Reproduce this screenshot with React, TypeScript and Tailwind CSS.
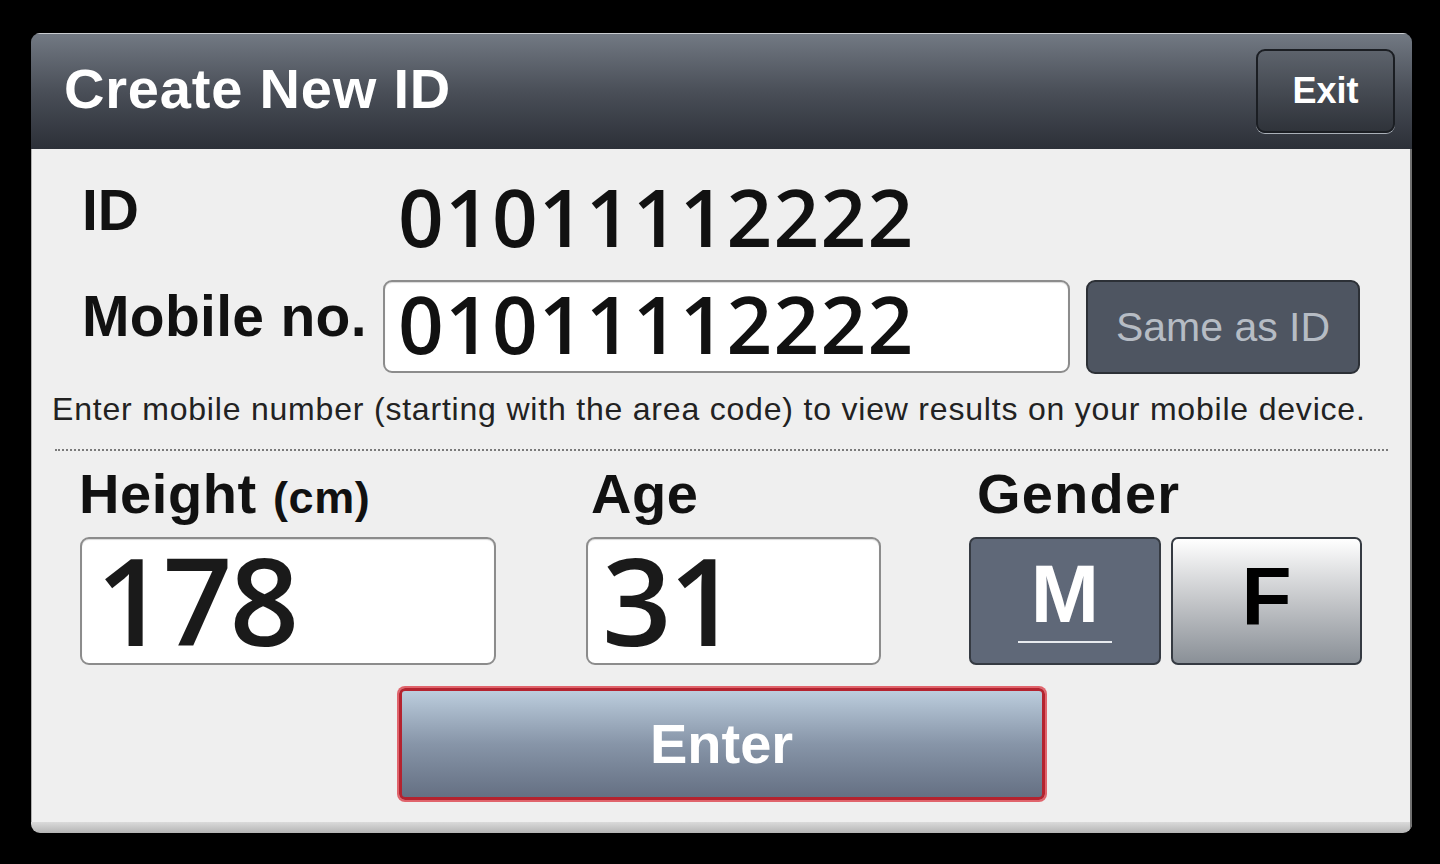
import React from "react";

const sans = { fontFamily: '"Liberation Sans", Arial, sans-serif' };
const digits = { fontFamily: '"Open Sans", "Noto Sans", sans-serif' };

export default function App() {
  return (
    <div className="w-[1440px] h-[864px] bg-black pt-[33px] pl-[31px]" style={sans}>
      <div className="w-[1381px] h-[800px] rounded-[9px] overflow-hidden flex flex-col">
        {/* title bar */}
        <div className="h-[116px] flex items-start justify-between pl-[33px] pr-[17px] bg-gradient-to-b from-[#737a84] via-[#4a4f58] to-[#2c3038] shadow-[inset_0_1px_0_#c9ccd0]">
          <div className="mt-[28px] text-[56px] leading-none font-bold text-white tracking-[0.8px]">
            Create New ID
          </div>
          <button className="mt-[16px] w-[139px] h-[84px] rounded-[9px] border-2 border-[#1b1e23] bg-gradient-to-b from-[#5d636c] to-[#2f333a] shadow-[0_1px_0_#aab0b8] flex items-center justify-center text-white text-[36px] font-bold leading-none">
            Exit
          </button>
        </div>

        {/* form body */}
        <div className="flex-1 flex flex-col bg-[#efefef] shadow-[inset_-2px_0_0_#707070,inset_1px_0_0_#b0b0b0]">
          {/* ID row */}
          <div className="flex items-start pt-[27px] pl-[51px]">
            <div className="w-[316px] mt-[6px] text-[57px] leading-none font-bold text-[#111]">ID</div>
            <div className="text-[80px] leading-none font-semibold text-[#111] tracking-[1.2px]" style={digits}>
              01011112222
            </div>
          </div>

          {/* mobile row */}
          <div className="flex items-start mt-[24px] pl-[51px]">
            <div className="w-[301px] mt-[8px] text-[57px] leading-none font-bold text-[#111] tracking-[0.3px]">
              Mobile no.
            </div>
            <div className="w-[687px] h-[93px] rounded-[9px] border-2 border-[#8c8c8c] bg-white pl-[13px] pt-[1px] shadow-[inset_0_1px_1px_rgba(0,0,0,0.15)]">
              <div className="text-[80px] leading-[80px] font-semibold text-[#111] tracking-[1.2px]" style={digits}>
                01011112222
              </div>
            </div>
            <button className="ml-[16px] w-[274px] h-[94px] rounded-[9px] border-2 border-[#2c3036] bg-[#4e5561] flex items-center justify-center text-[41px] leading-none text-[#b6bcc4]">
              Same as ID
            </button>
          </div>

          {/* hint */}
          <div className="mt-[19px] pl-[21px] text-[32px] leading-none text-[#222] tracking-[0.8px] whitespace-nowrap">
            Enter mobile number (starting with the area code) to view results on your mobile device.
          </div>
          <div className="mt-[24px] ml-[24px] w-[1333px] border-t-2 border-dotted border-[#7a7a7a]" />

          {/* height / age / gender */}
          <div className="flex mt-[15px] pl-[49px]">
            <div className="w-[416px] flex flex-col">
              <div className="h-[56px] text-[56px] leading-none font-bold text-[#111] -ml-[1px] tracking-[0.6px] whitespace-nowrap">
                Height <span className="text-[45px]">(cm)</span>
              </div>
              <div className="mt-[15px] h-[128px] rounded-[9px] border-2 border-[#8c8c8c] bg-white pl-[14px] flex items-center shadow-[inset_0_1px_1px_rgba(0,0,0,0.15)]">
                <span className="text-[122px] leading-[122px] font-semibold text-[#1a1a1a] tracking-[-3px] -mt-[4px]" style={digits}>
                  178
                </span>
              </div>
            </div>
            <div className="ml-[90px] w-[295px] flex flex-col">
              <div className="h-[56px] text-[56px] leading-none font-bold text-[#111] ml-[5px] tracking-[0.5px]">Age</div>
              <div className="mt-[15px] h-[128px] rounded-[9px] border-2 border-[#8c8c8c] bg-white pl-[14px] flex items-center shadow-[inset_0_1px_1px_rgba(0,0,0,0.15)]">
                <span className="text-[122px] leading-[122px] font-semibold text-[#1a1a1a] tracking-[-3px] -mt-[4px]" style={digits}>
                  31
                </span>
              </div>
            </div>
            <div className="ml-[88px] w-[393px] flex flex-col">
              <div className="h-[56px] text-[56px] leading-none font-bold text-[#111] ml-[8px] tracking-[1.2px]">Gender</div>
              <div className="mt-[15px] flex gap-[10px]">
                <button className="w-[192px] h-[128px] rounded-[7px] border-2 border-[#353a42] bg-[#5f6878] flex flex-col items-center justify-center">
                  <span className="text-[82px] leading-none font-bold text-white -mt-[6px]">M</span>
                  <span className="mt-[6px] w-[94px] h-[2px] bg-[#e8ebef]" />
                </button>
                <button className="w-[191px] h-[128px] rounded-[7px] border-2 border-[#353a42] bg-gradient-to-b from-[#ffffff] via-[#c4c6c9] to-[#8a9097] flex items-center justify-center">
                  <span className="text-[82px] leading-none font-bold text-black -mt-[8px]">F</span>
                </button>
              </div>
            </div>
          </div>

          {/* submit */}
          <div className="mt-[23px] flex justify-center">
            <button className="w-[646px] h-[112px] rounded-[6px] border-[3px] border-[#b4232f] shadow-[0_0_0_2px_#e0646c] bg-gradient-to-b from-[#bccddd] via-[#8795a8] to-[#657083] flex items-center justify-center text-white text-[56px] font-bold leading-none">
              Enter
            </button>
          </div>
        </div>
        <div className="h-[11px] bg-gradient-to-b from-[#dadada] to-[#b4b4b4] shadow-[inset_-2px_0_0_#707070]" />
      </div>
    </div>
  );
}
